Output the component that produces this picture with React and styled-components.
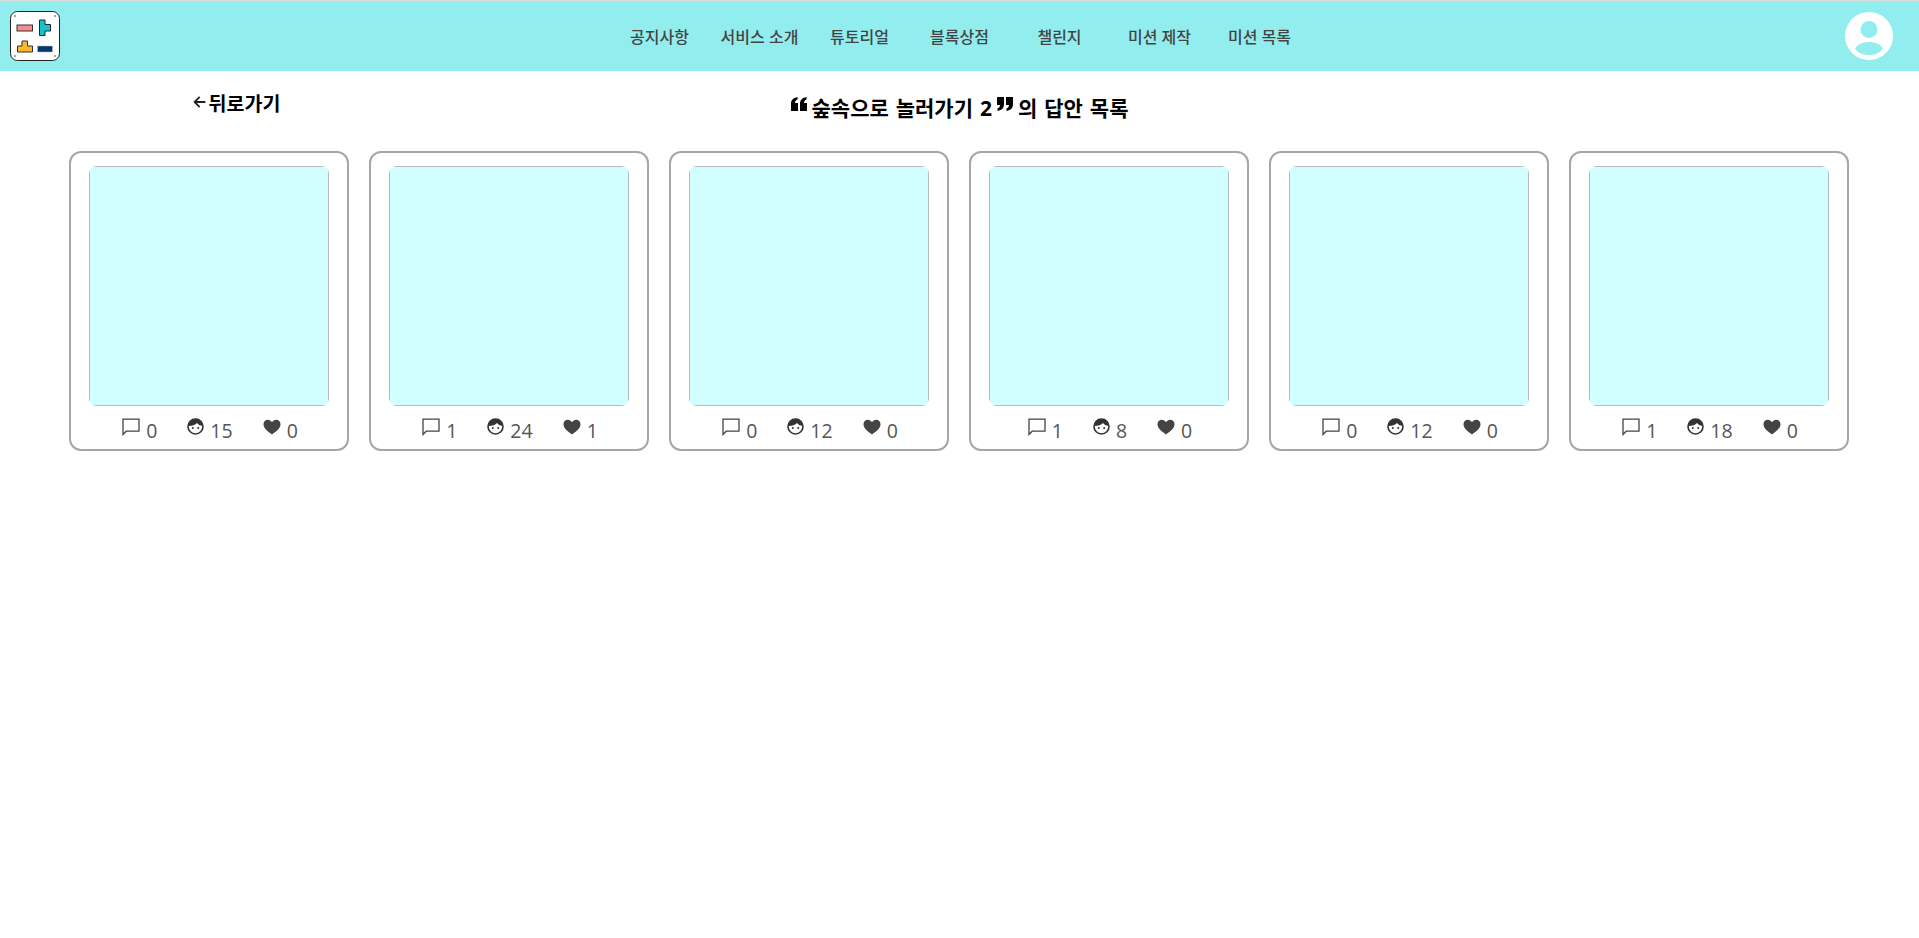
import React from "react";
import styled, { createGlobalStyle } from "styled-components";

const GlobalStyle = createGlobalStyle`
  html, body {
    margin: 0;
    padding: 0;
    background: #fff;
  }
  body {
    font-family: "Open Sans", "Noto Sans CJK KR", sans-serif;
  }
`;

const Page = styled.div`
  min-height: 938px;
  border-top: 1px solid #ddd;
  box-sizing: border-box;
`;

const Header = styled.header`
  height: 70px;
  background: #92eeee;
  display: flex;
  align-items: center;
  justify-content: space-between;
  padding: 0 26px 0 10px;
`;

const LogoBox = styled.a`
  display: block;
  width: 50px;
  height: 50px;
`;

const Nav = styled.nav`
  display: grid;
  grid-template-columns: repeat(7, 100px);
  margin-left: 14px;
`;

const NavItem = styled.a`
  text-align: center;
  font-size: 16px;
  font-weight: 500;
  color: #444;
`;

const Avatar = styled.a`
  display: block;
  width: 48px;
  height: 48px;
`;

const TitleRow = styled.div`
  display: grid;
  grid-template-columns: 473px 1fr 473px;
  height: 80px;
`;

const BackLink = styled.a`
  display: flex;
  align-items: center;
  justify-content: center;
  gap: 2px;
  height: 24px;
  margin-top: 19px;
  font-size: 19.5px;
  font-weight: 700;
  color: #000;
`;

const Title = styled.h2`
  margin: 24px 0 0;
  display: flex;
  align-items: center;
  justify-content: center;
  gap: 5px;
  height: 24px;
  font-size: 21px;
  font-weight: 700;
  word-spacing: 1.5px;
  color: #000;
  white-space: pre;
`;

const Quote = styled.svg`
  width: 16px;
  height: 16px;
  margin-bottom: 6px;
`;

const CardGrid = styled.section`
  display: grid;
  grid-template-columns: repeat(6, 280px);
  gap: 20px;
  padding-left: 69px;
`;

const Card = styled.article`
  height: 300px;
  box-sizing: border-box;
  border: 2px solid #a6a6a6;
  border-radius: 12px;
  padding: 13px 18px 0;
`;

const Thumb = styled.div`
  width: 240px;
  height: 240px;
  border-radius: 8px;
  overflow: hidden;
`;

const ThumbImage = styled.div`
  height: 100%;
  box-sizing: border-box;
  background: #d1ffff;
  border: 1px solid #b3bcbc;
`;

const Stats = styled.div`
  display: flex;
  justify-content: center;
  gap: 30px;
  margin-top: 10px;
  padding-left: 2px;
`;

const Stat = styled.span`
  display: flex;
  align-items: center;
  gap: 6px;
  height: 28px;
  font-size: 19.5px;
  color: #555;
`;

const StatIcon = styled.svg`
  width: ${(p) => p.$size || 18}px;
  height: ${(p) => p.$size || 18}px;
  margin-bottom: 7px;
  flex-shrink: 0;
`;

function Logo() {
  return (
    <svg viewBox="0 0 50 50" width="50" height="50">
      <rect x="0.5" y="0.5" width="49" height="49" rx="7" fill="#fff" stroke="#222" />
      <g fill="#333">
        <circle cx="5" cy="5" r="0.8" />
        <circle cx="45" cy="5" r="0.8" />
        <circle cx="5" cy="45" r="0.8" />
        <circle cx="45" cy="45" r="0.8" />
      </g>
      <rect x="7" y="14" width="15.5" height="6" fill="#f98a8f" stroke="#333" />
      <path d="M29.5 9h5.5v4.5h5.5V20H35v4.5h-5.5z" fill="#14c4cc" stroke="#223" />
      <path d="M7.5 41v-6H12v-5h5.5v5h5v6z" fill="#fdb92e" stroke="#333" />
      <rect x="27.5" y="35" width="15" height="6" fill="#06386e" stroke="#bbb" strokeWidth="0.5" />
    </svg>
  );
}

function AvatarIcon() {
  return (
    <svg viewBox="0 0 48 48" width="48" height="48">
      <circle cx="24" cy="24" r="24" fill="#fff" />
      <circle cx="24" cy="17.5" r="8.5" fill="#92eeee" />
      <path d="M10 36.5C13 32 18 30 24 30s11 2 14 6.5C35 41 30 43 24 43s-11-2-14-6.5z" fill="#92eeee" />
    </svg>
  );
}

function ArrowLeft() {
  return (
    <svg viewBox="0 0 13 13" width="14" height="14">
      <path d="M11.5 6.5H1.8M6.2 1.8 1.5 6.5l4.7 4.7" fill="none" stroke="#222" strokeWidth="1.7" />
    </svg>
  );
}

function OpenQuote() {
  return (
    <Quote viewBox="0 0 16 16">
      <path d="M0 15V8c0-4 2-6 6.5-7v2.5C5 4 4 5 4 7h3v8zM9 15V8c0-4 2-6 6.5-7v2.5C14 4 13 5 13 7h3v8z" fill="#000" />
    </Quote>
  );
}

function CloseQuote() {
  return (
    <Quote viewBox="0 0 16 16">
      <path d="M16 1v7c0 4-2 6-6.5 7v-2.5C11 12 12 11 12 9H9V1zM7 1v7c0 4-2 6-6.5 7v-2.5C2 12 3 11 3 9H0V1z" fill="#000" />
    </Quote>
  );
}

function CommentIcon() {
  return (
    <StatIcon viewBox="0 0 18 18">
      <path d="M1 16.5V1.2h16v12H4.2z" fill="none" stroke="#444" strokeWidth="1.3" />
    </StatIcon>
  );
}

function FaceIcon() {
  return (
    <StatIcon viewBox="0 0 17 17" $size={17}>
      <circle cx="8.5" cy="8.5" r="7.5" fill="#fff" stroke="#333" strokeWidth="1.6" />
      <path d="M1.5 8C2 3 5 1 8.5 1S15 3 15.5 8C13 7.5 11 6.5 10 5 8.5 7 5 8 1.5 8z" fill="#333" />
      <circle cx="5.8" cy="10" r="1" fill="#333" />
      <circle cx="11.2" cy="10" r="1" fill="#333" />
    </StatIcon>
  );
}

function HeartIcon() {
  return (
    <StatIcon viewBox="0 0 18 16">
      <path d="M9 15.5C3.5 11.5.5 8.6.5 5.2.5 2.6 2.5.8 4.8.8 6.5.8 8 1.7 9 3.3 10 1.7 11.5.8 13.2.8c2.3 0 4.3 1.8 4.3 4.4 0 3.4-3 6.3-8.5 10.3z" fill="#444" />
    </StatIcon>
  );
}

const navItems = ["공지사항", "서비스 소개", "튜토리얼", "블록상점", "챌린지", "미션 제작", "미션 목록"];

const answers = [
  { comments: 0, views: 15, likes: 0 },
  { comments: 1, views: 24, likes: 1 },
  { comments: 0, views: 12, likes: 0 },
  { comments: 1, views: 8, likes: 0 },
  { comments: 0, views: 12, likes: 0 },
  { comments: 1, views: 18, likes: 0 },
];

export default function App() {
  return (
    <Page>
      <GlobalStyle />
      <Header>
        <LogoBox>
          <Logo />
        </LogoBox>
        <Nav>
          {navItems.map((item) => (
            <NavItem key={item}>{item}</NavItem>
          ))}
        </Nav>
        <Avatar>
          <AvatarIcon />
        </Avatar>
      </Header>
      <TitleRow>
        <BackLink>
          <ArrowLeft />
          뒤로가기
        </BackLink>
        <Title>
          <OpenQuote />
          숲속으로 놀러가기 2
          <CloseQuote />
          의 답안 목록
        </Title>
      </TitleRow>
      <CardGrid>
        {answers.map((answer, i) => (
          <Card key={i}>
            <Thumb>
              <ThumbImage />
            </Thumb>
            <Stats>
              <Stat>
                <CommentIcon />
                {answer.comments}
              </Stat>
              <Stat>
                <FaceIcon />
                {answer.views}
              </Stat>
              <Stat>
                <HeartIcon />
                {answer.likes}
              </Stat>
            </Stats>
          </Card>
        ))}
      </CardGrid>
    </Page>
  );
}
